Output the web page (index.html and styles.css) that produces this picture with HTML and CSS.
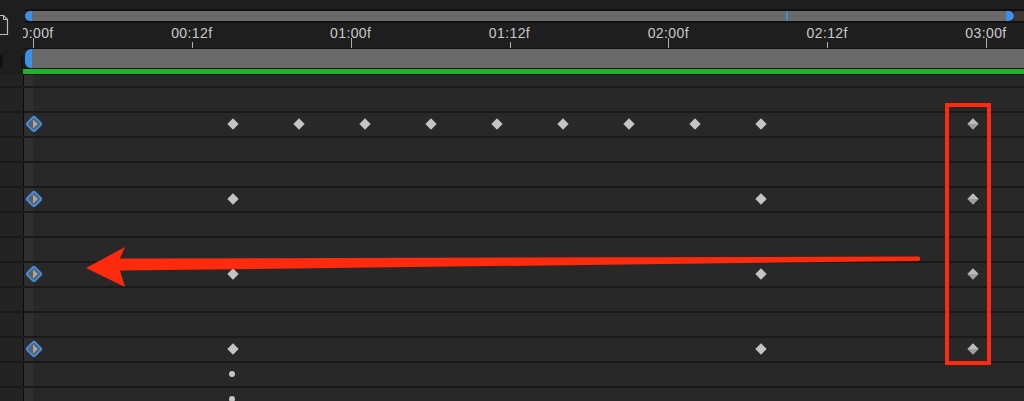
FILE: index.html
```html
<!DOCTYPE html>
<html>
<head>
<meta charset="utf-8">
<link rel="stylesheet" href="styles.css">
</head>
<body>
<div class="app">
  <div class="head">
    <div class="side-head">
      <svg class="doc-icon" width="9" height="22" viewBox="0 0 9 22">
        <path d="M-4 1.5 H3.5 L7.5 5.5 V20.5 H-4" fill="none" stroke="#bdbdbd" stroke-width="1.2"/>
        <path d="M3.5 1.5 V5.5 H7.5" fill="none" stroke="#bdbdbd" stroke-width="1"/>
      </svg>
      <span class="nub nub-l"></span>
      <span class="nub nub-r"></span>
    </div>
    <div class="time-head">
      <div class="scroll">
        <div class="sbar">
          <span class="handle handle-l"></span>
          <div class="sbar-track"><span class="sbar-mark"></span></div>
          <span class="handle handle-r"></span>
        </div>
        <span class="sbar-end"></span>
      </div>
      <div class="ruler">
        <span class="tick major" style="left:10px"></span><span class="label" style="left:10px">00:00f</span>
        <span class="tick" style="left:168.8px"></span><span class="label" style="left:168.8px">00:12f</span>
        <span class="tick major" style="left:327.7px"></span><span class="label" style="left:327.7px">01:00f</span>
        <span class="tick" style="left:486.5px"></span><span class="label" style="left:486.5px">01:12f</span>
        <span class="tick major" style="left:645.3px"></span><span class="label" style="left:645.3px">02:00f</span>
        <span class="tick" style="left:804.2px"></span><span class="label" style="left:804.2px">02:12f</span>
        <span class="tick major" style="left:963px"></span><span class="label" style="left:963px">03:00f</span>
      </div>
      <div class="workarea"><span class="handle handle-l"></span><div class="work-track"></div></div>
      <div class="green"></div>
    </div>
  </div>

  <div class="rows">
    <div class="row row-first"><div class="cell-side"></div><div class="cell-track"></div></div>
    <div class="row"><div class="cell-side"></div><div class="cell-track"></div></div>
    <div class="row">
      <div class="cell-side"></div>
      <div class="cell-track">
        <svg class="kf-sel" style="left:9.5px" width="22" height="22" viewBox="0 0 22 22"><rect x="5.5" y="5.5" width="11" height="11" rx="2" transform="rotate(45 11 11)" fill="#5f5f5f" stroke="#3e8fe8" stroke-width="2"/><path d="M10 6.5 L15 11 L10 15.5 Z" fill="#a6a6a6"/></svg>
        <span class="kf" style="left:208.5px"></span>
        <span class="kf" style="left:274.5px"></span>
        <span class="kf" style="left:340.5px"></span>
        <span class="kf" style="left:406.5px"></span>
        <span class="kf" style="left:472.5px"></span>
        <span class="kf" style="left:538.5px"></span>
        <span class="kf" style="left:604.5px"></span>
        <span class="kf" style="left:670.5px"></span>
        <span class="kf" style="left:736.5px"></span>
        <span class="kf kf-half" style="left:948.5px"></span>
      </div>
    </div>
    <div class="row"><div class="cell-side"></div><div class="cell-track"></div></div>
    <div class="row"><div class="cell-side"></div><div class="cell-track"></div></div>
    <div class="row">
      <div class="cell-side"></div>
      <div class="cell-track">
        <svg class="kf-sel" style="left:9.5px" width="22" height="22" viewBox="0 0 22 22"><rect x="5.5" y="5.5" width="11" height="11" rx="2" transform="rotate(45 11 11)" fill="#5f5f5f" stroke="#3e8fe8" stroke-width="2"/><path d="M10 6.5 L15 11 L10 15.5 Z" fill="#a6a6a6"/></svg>
        <span class="kf" style="left:208.5px"></span>
        <span class="kf" style="left:736.5px"></span>
        <span class="kf kf-half" style="left:948.5px"></span>
      </div>
    </div>
    <div class="row"><div class="cell-side"></div><div class="cell-track"></div></div>
    <div class="row"><div class="cell-side"></div><div class="cell-track"></div></div>
    <div class="row">
      <div class="cell-side"></div>
      <div class="cell-track">
        <svg class="kf-sel" style="left:9.5px" width="22" height="22" viewBox="0 0 22 22"><rect x="5.5" y="5.5" width="11" height="11" rx="2" transform="rotate(45 11 11)" fill="#5f5f5f" stroke="#3e8fe8" stroke-width="2"/><path d="M10 6.5 L15 11 L10 15.5 Z" fill="#a6a6a6"/></svg>
        <span class="kf" style="left:208.5px"></span>
        <span class="kf" style="left:736.5px"></span>
        <span class="kf kf-half" style="left:948.5px"></span>
      </div>
    </div>
    <div class="row"><div class="cell-side"></div><div class="cell-track"></div></div>
    <div class="row"><div class="cell-side"></div><div class="cell-track"></div></div>
    <div class="row">
      <div class="cell-side"></div>
      <div class="cell-track">
        <svg class="kf-sel" style="left:9.5px" width="22" height="22" viewBox="0 0 22 22"><rect x="5.5" y="5.5" width="11" height="11" rx="2" transform="rotate(45 11 11)" fill="#5f5f5f" stroke="#3e8fe8" stroke-width="2"/><path d="M10 6.5 L15 11 L10 15.5 Z" fill="#a6a6a6"/></svg>
        <span class="kf" style="left:208.5px"></span>
        <span class="kf" style="left:736.5px"></span>
        <span class="kf kf-half" style="left:948.5px"></span>
      </div>
    </div>
    <div class="row">
      <div class="cell-side"></div>
      <div class="cell-track"><span class="dot" style="left:207.5px"></span></div>
    </div>
    <div class="row">
      <div class="cell-side"></div>
      <div class="cell-track"><span class="dot" style="left:207.5px"></span></div>
    </div>
  </div>

  <svg class="annot" width="1024" height="401" viewBox="0 0 1024 401">
    <rect x="947" y="105" width="42" height="258" fill="none" stroke="#fd2a0e" stroke-width="4"/>
    <polygon points="86,268 125,247 120,258.5 918,256.5 918,261 120,270.5 125,287" fill="#fd2a0e"/>
    <circle cx="918" cy="258.75" r="2.25" fill="#fd2a0e"/>
  </svg>
</div>
</body>
</html>
```

FILE: styles.css
```css
* { box-sizing: border-box; }
html, body { margin: 0; padding: 0; }
body {
  width: 1024px;
  height: 401px;
  overflow: hidden;
  background: #282828;
  font-family: "Liberation Sans", Arial, sans-serif;
}
.app {
  position: relative;
  width: 1024px;
  height: 401px;
  overflow: hidden;
}
.head {
  display: grid;
  grid-template-columns: 23px 1fr;
  height: 75px;
  background: #1f1f1f;
}
.side-head {
  position: relative;
  background: #1e1e1e;
}
.doc-icon {
  position: absolute;
  left: 0;
  top: 14px;
}
.nub {
  position: absolute;
  top: 55px;
  height: 13px;
  background: #121212;
}
.nub-l { left: 0; width: 3px; }
.nub-r { left: 21px; width: 2px; }
.time-head {
  display: flex;
  flex-direction: column;
  overflow: hidden;
}
.scroll {
  display: flex;
  height: 23px;
  padding-top: 9px;
}
.sbar {
  flex: 1;
  display: flex;
  margin-left: 2px;
  height: 14px;
  border-top: 2px solid #111;
  border-bottom: 2px solid #111;
}
.sbar-track {
  position: relative;
  flex: 1;
  background: #6a6a6a;
}
.sbar-mark {
  position: absolute;
  left: 754px;
  top: 0;
  width: 2px;
  height: 10px;
  background: #3a8de4;
}
.handle {
  width: 7px;
  background: #3e8fe8;
}
.handle-l { border-radius: 6px 0 0 6px; }
.handle-r { width: 8px; border-radius: 0 6px 6px 0; }
.sbar-end {
  width: 10px;
  height: 14px;
  background: #3a3531;
  border-top: 2px solid #111;
  border-bottom: 2px solid #111;
}
.ruler {
  position: relative;
  height: 26px;
  background: #1e1e1e;
  border-bottom: 1px solid #111;
}
.label {
  position: absolute;
  top: 2px;
  transform: translateX(-50%);
  font-size: 14px;
  letter-spacing: 0.4px;
  color: #c9c9c9;
  white-space: nowrap;
}
.tick {
  position: absolute;
  bottom: 0;
  width: 1px;
  height: 6px;
  background: #b0b0b0;
}
.tick.major { height: 10px; }
.workarea {
  display: flex;
  height: 20px;
  padding-left: 2px;
  border-bottom: 1px solid #111;
  background: #1e1e1e;
}
.work-track {
  flex: 1;
  background: #6a6a6a;
}
.green {
  height: 6px;
  border-top: 5px solid #1fb22d;
  background: #151515;
}
.rows {
  display: flex;
  flex-direction: column;
}
.row {
  display: grid;
  grid-template-columns: 23px 1fr;
  height: 25px;
  flex: none;
  border-bottom: 2px solid #191919;
}
.row-first { height: 13px; }
.cell-side { background: #232323; }
.cell-track {
  position: relative;
  border-left: 1px solid #0b0b0b;
  background: linear-gradient(to right, #2f2f2f 9px, #282828 9px);
}
.kf {
  position: absolute;
  top: 11px;
  width: 8px;
  height: 8px;
  background: #c4c4c4;
  transform: translate(-50%, -50%) rotate(45deg);
}
.kf-half {
  background: linear-gradient(135deg, #bcbcbc 0 46%, #6c6c6c 46% 54%, #9e9e9e 54%);
}
.kf-sel {
  position: absolute;
  top: 11px;
  transform: translate(-50%, -50%);
}
.dot {
  position: absolute;
  top: 11px;
  width: 6px;
  height: 6px;
  border-radius: 50%;
  background: #c4c4c4;
  transform: translate(-50%, -50%);
}
.annot {
  position: absolute;
  left: 0;
  top: 0;
  pointer-events: none;
}
```
